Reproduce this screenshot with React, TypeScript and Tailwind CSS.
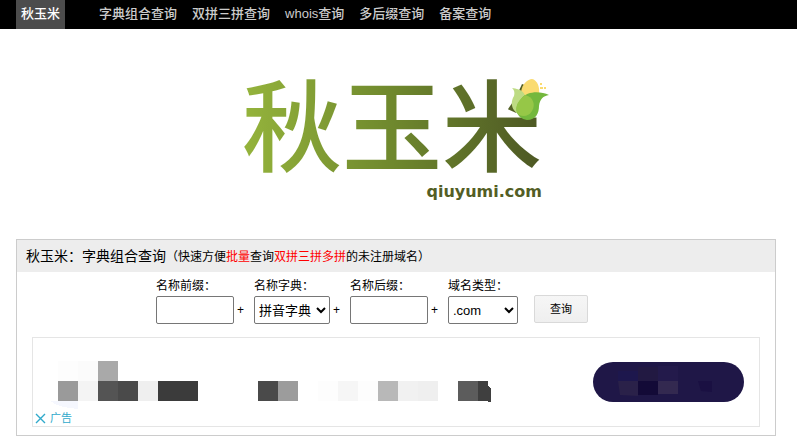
import React from "react";

const navLinks = ["字典组合查询", "双拼三拼查询", "whois查询", "多后缀查询", "备案查询"];

const blocks: [number, number, number, number, string][] = [
  [8, 0, 20, 20, "#fdfdfd"],
  [28, 0, 20, 20, "#fbfbfb"],
  [48, 0, 20, 20, "#a9a9a9"],
  [8, 20, 20, 20, "#9a9a9a"],
  [28, 20, 20, 20, "#f4f4f4"],
  [48, 20, 20, 20, "#545454"],
  [68, 20, 20, 20, "#4a4a4a"],
  [88, 20, 20, 20, "#efefef"],
  [108, 20, 40, 20, "#3b3b3b"],
  [208, 20, 20, 20, "#4a4a4a"],
  [228, 20, 20, 20, "#9c9c9c"],
  [268, 20, 20, 20, "#fdfdfd"],
  [288, 20, 20, 20, "#f6f6f6"],
  [308, 20, 20, 20, "#fdfdfd"],
  [328, 20, 20, 20, "#b8b8b8"],
  [348, 20, 20, 20, "#f1f1f1"],
  [368, 20, 20, 20, "#efefef"],
  [408, 20, 20, 20, "#5c5c5c"],
  [428, 20, 10, 20, "#3f3f3f"],
];

function Corn() {
  return (
    <svg className="absolute top-0 right-0 h-[42px] w-[39px]" viewBox="0 0 39 42" aria-hidden="true">
      <path d="M10 13C11 5 17 0 21 0C26 1 29 7 28 16L19 22Z" fill="#fadb70" />
      <g fill="#fadb70">
        <rect x="29" y="4" width="2" height="2" />
        <rect x="29" y="8" width="3" height="2" />
        <rect x="33" y="8" width="2" height="2" />
      </g>
      <path d="M1 9C10 10 14 13 15 20L10 36C2 34 -2 25 3 17C4 13 3 11 1 9Z" fill="#bddb83" />
      <path d="M38 16C29 12 16 12 10 20C2 29 5 39 16 41C25 41 28 34 28 27C29 20 32 17 38 16Z" fill="#74b83d" />
      <path d="M14 16C22 18 25 25 21 32C18 37 13 38 8 36C3 31 5 23 14 16Z" fill="#96c747" />
    </svg>
  );
}

function Logo() {
  return (
    <a href="#" aria-label="秋玉米 qiuyumi.com" className="relative mx-auto block h-[121px] w-[308px]">
      <span className="block bg-linear-to-r from-[#95b43c] via-[#6e872d] to-[#4b5523] bg-clip-text text-[100px] leading-[100px] font-medium whitespace-nowrap text-transparent">
        秋玉米
      </span>
      <span className="block pt-[5px] pr-2 text-right font-['DejaVu_Sans'] text-[16px] leading-4 font-bold text-[#535e25]">
        qiuyumi.com
      </span>
      <Corn />
    </a>
  );
}

function Field({ id, label, className, children }: { id: string; label: string; className: string; children: React.ReactNode }) {
  return (
    <div className={"flex flex-col " + className}>
      <label htmlFor={id} className="mt-1 h-5 text-[12px] leading-5 whitespace-nowrap">
        {label}
      </label>
      {children}
    </div>
  );
}

const control = "h-7 w-full rounded-[2px] border border-[#767676] bg-white text-[13px] text-black";

function Plus() {
  return <span className="w-5 pl-[3px] text-[12px] leading-7">+</span>;
}

export default function App() {
  return (
    <div className="bg-white font-['Liberation_Sans','Noto_Sans_CJK_SC',sans-serif] text-black">
      <nav className="flex h-[29px] items-stretch bg-black pl-4 text-[13px] leading-7 font-medium whitespace-nowrap text-[#ccc]">
        <a href="#" className="mr-[34px] bg-[#4c4c4c] px-[5px] text-white">
          秋玉米
        </a>
        <div className="flex gap-[15px]">
          {navLinks.map((t) => (
            <a key={t} href="#">
              {t}
            </a>
          ))}
        </div>
      </nav>

      <main className="pr-[21px] pl-4">
        <header className="pt-[50px] pb-[39px]">
          <Logo />
        </header>

        <section className="border border-[#ccc]">
          <h1 className="h-8 bg-[#ededed] pl-[9px] text-[14px] leading-8 whitespace-nowrap">
            秋玉米：字典组合查询
            <small className="text-[12px]">
              （快速方便<span className="text-[#f00]">批量</span>查询
              <span className="text-[#f00]">双拼三拼多拼</span>的未注册域名）
            </small>
          </h1>

          <form className="flex items-end justify-center pr-12" onSubmit={(e) => e.preventDefault()}>
            <Field id="prefix" label="名称前缀：" className="w-[78px]">
              <input id="prefix" type="text" className={control + " px-1"} />
            </Field>
            <Plus />
            <Field id="dict" label="名称字典：" className="w-[76px]">
              <select id="dict" className={control}>
                <option>拼音字典</option>
              </select>
            </Field>
            <Plus />
            <Field id="suffix" label="名称后缀：" className="w-[78px]">
              <input id="suffix" type="text" className={control + " px-1"} />
            </Field>
            <Plus />
            <Field id="tld" label="域名类型：" className="w-[70px]">
              <select id="tld" className={control}>
                <option>.com</option>
              </select>
            </Field>
            <button
              type="submit"
              className="mb-px ml-4 h-7 w-[54px] rounded-[2px] border border-[#d9d9d9] bg-linear-to-b from-[#f6f6f6] to-[#efefef] text-[11px]"
            >
              查询
            </button>
          </form>

          <aside className="mx-[15px] mt-[13px] mb-2 flex h-[90px] flex-col justify-between border border-[#e5e5e5] pt-6">
            <div className="flex justify-between pr-[15px] pl-[17px]">
              <svg className="-mt-px h-12 w-[444px]" viewBox="0 0 444 48" shapeRendering="crispEdges" aria-hidden="true">
                <path d="M0 40H28V48C16 47 7 45 0 40Z" fill="#f5f7fe" />
                {blocks.map(([x, y, w, h, fill]) => (
                  <rect key={x + "-" + y} x={x} y={y} width={w} height={h} fill={fill} />
                ))}
                <path d="M438 25L441 28V41H438Z" fill="#3f3f3f" />
              </svg>
              <button type="button" aria-label="广告" className="h-10 w-[151px] overflow-hidden rounded-full bg-[#1f1747]">
                <svg className="size-full" viewBox="0 0 151 40" aria-hidden="true">
                  <rect x="25" y="9" width="20" height="10" fill="#1d174d" />
                  <rect x="45" y="5" width="20" height="14" fill="#221942" />
                  <rect x="65" y="4" width="20" height="15" fill="#231a4b" />
                  <path d="M25 19H45V34L27 33Z" fill="#2a2149" />
                  <rect x="45" y="19" width="20" height="14" fill="#130a37" />
                  <rect x="65" y="19" width="20" height="13" fill="#332950" />
                  <path d="M105 19H119V30L108 29Z" fill="#1a1042" />
                </svg>
              </button>
            </div>
            <div className="-mt-1 flex h-4 items-center gap-1 pl-[2px] text-[11px] leading-4 text-[#30a9cb]">
              <button type="button" aria-label="关闭">
                <svg className="size-[11px]" viewBox="0 0 11 11" aria-hidden="true">
                  <path d="M1 1L10 10M10 1L1 10" stroke="currentColor" strokeWidth="1.4" />
                </svg>
              </button>
              <a href="#">广告</a>
            </div>
          </aside>
        </section>
      </main>
    </div>
  );
}
